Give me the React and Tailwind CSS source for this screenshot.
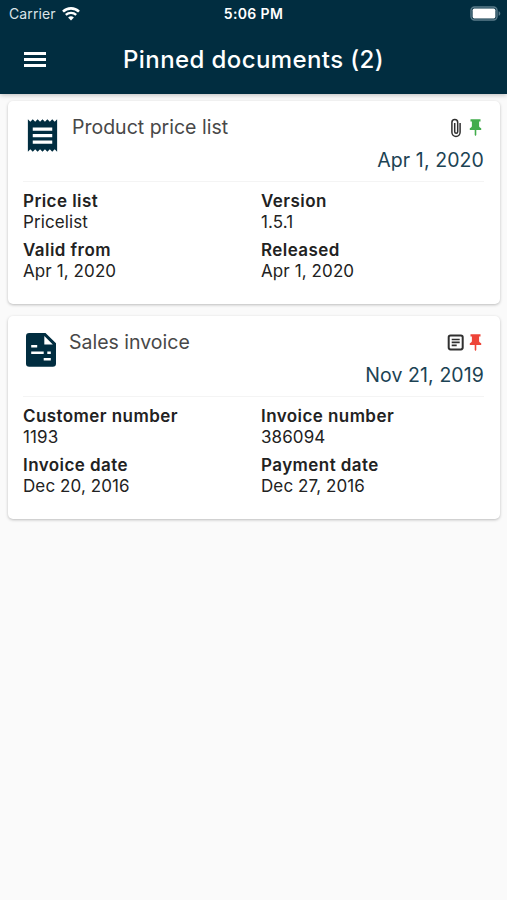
import { MdReceipt } from "react-icons/md";

const documents = [
  {
    id: 1,
    title: "Product price list",
    date: "Apr 1, 2020",
    type: "pricelist",
    fields: [
      ["Price list", "Pricelist"],
      ["Version", "1.5.1"],
      ["Valid from", "Apr 1, 2020"],
      ["Released", "Apr 1, 2020"],
    ],
  },
  {
    id: 2,
    title: "Sales invoice",
    date: "Nov 21, 2019",
    type: "invoice",
    fields: [
      ["Customer number", "1193"],
      ["Invoice number", "386094"],
      ["Invoice date", "Dec 20, 2016"],
      ["Payment date", "Dec 27, 2016"],
    ],
  },
];

function WifiIcon() {
  return (
    <svg width="18" height="14" viewBox="0 0 18 14" fill="none">
      <path d="M1 4.6a11.6 11.6 0 0 1 16 0" stroke="white" strokeWidth="2.6" />
      <path d="M3.8 7.9a7.6 7.6 0 0 1 10.4 0" stroke="white" strokeWidth="2.3" />
      <path d="M9 13.6l-2.9-3a4.2 4.2 0 0 1 5.8 0z" fill="white" />
    </svg>
  );
}

function BatteryIcon() {
  return (
    <svg width="32" height="15" viewBox="0 0 32 15">
      <rect x="1" y="1" width="26" height="13" rx="3.5" fill="none" stroke="#5b7c8b" strokeWidth="1.4" />
      <rect x="2.6" y="2.6" width="22.8" height="9.8" rx="1.6" fill="white" />
      <path d="M28.6 5.2v4.6c1-.4 1.7-1.2 1.7-2.3s-.7-1.9-1.7-2.3z" fill="#5b7c8b" />
    </svg>
  );
}

function InvoiceIcon() {
  return (
    <svg width="30" height="34" viewBox="0 0 30 34">
      <path
        d="M3.2 0H19.5L30 10.3V30.5a3.2 3.2 0 0 1-3.2 3.2H3.2A3.2 3.2 0 0 1 0 30.5V3.2A3.2 3.2 0 0 1 3.2 0z"
        fill="#012d40"
      />
      <path d="M18.3 3v8.5h8.5z" fill="white" />
      <path d="M5.2 12h6v2.6h-6zM5.2 18.5h12.5v2.6H5.2zM21.3 18.5h3.5v2.6h-3.5zM17.7 25h7.1v2.6h-7.1z" fill="white" />
    </svg>
  );
}

function ClipIcon() {
  return (
    <svg width="20" height="20" viewBox="0 0 20 20" fill="none" stroke="#303030" strokeWidth="1.5">
      <path d="M14.1 5v9.300a4.100 4.100 0 0 1-8.200 0V4.400a2.900 2.900 0 0 1 5.800 0v9.400a1.500 1.500 0 0 1-3 0V5" />
    </svg>
  );
}

function ArticleIcon() {
  return (
    <svg width="20" height="20" viewBox="0 0 20 20" fill="none" stroke="#303030">
      <rect x="2.7" y="2.4" width="14" height="14" rx="1.8" strokeWidth="2" />
      <path d="M5.700 6.500h8M5.700 9.400h8M5.700 12.300h5" strokeWidth="1.700" />
    </svg>
  );
}

function PinIcon({ color }) {
  return (
    <svg width="19" height="20" viewBox="0 0 19 20" fill={color}>
      <path d="M4.5 1.2h10v2.200h-1.400v4.300c0 1.300.8 2.100 2.100 2.500v1.700h-4.900v5.200l-.8.800-.8-.8v-5.200H3.800v-1.700c1.300-.4 2.100-1.200 2.100-2.500V3.400H4.500z" />
    </svg>
  );
}

function DocumentCard({ doc }) {
  const isInvoice = doc.type === "invoice";

  return (
    <div className="h-[203px] rounded-[5px] bg-white pr-4 pl-[15px] shadow-[0_1px_3px_rgba(0,0,0,0.25)]">
      <div className="flex h-[81px] border-b border-[#f4f4f4]">
        {isInvoice ? (
          <div className="w-[46px] pt-[17px] pl-[3px]">
            <InvoiceIcon />
          </div>
        ) : (
          <div className="w-[49px] pt-[15px]">
            <MdReceipt size={39} color="#012d40" />
          </div>
        )}
        <h2 className="pt-[12.5px] text-[19.5px] leading-7 text-[#484848]">{doc.title}</h2>
        <div className="ml-auto flex flex-col items-end pt-[17px]">
          <div className="-mr-px flex h-5 items-center">
            {isInvoice ? <ArticleIcon /> : <ClipIcon />}
            <PinIcon color={isInvoice ? "#ee4438" : "#42ad4c"} />
          </div>
          <p className="mt-[8.5px] text-[19.5px] leading-7 tracking-[0.1px] text-[#1c4354]">{doc.date}</p>
        </div>
      </div>
      <div className="grid grid-cols-[238px_1fr] gap-y-[7px] pt-[9.5px] text-[17px] leading-[21px] text-[#222]">
        {doc.fields.map(([label, value]) => (
          <div key={label}>
            <p className="font-semibold tracking-[0.43px]">{label}</p>
            <p className="tracking-[0.1px]">{value}</p>
          </div>
        ))}
      </div>
    </div>
  );
}

export default function App() {
  return (
    <div className="h-[900px] w-[507px] overflow-hidden bg-[#fafafa] font-['Inter',sans-serif]">
      <header className="relative h-[94px] bg-[#012d40] text-white shadow-[0_1px_5px_rgba(0,0,0,0.25)]">
        <div className="grid h-[27px] grid-cols-3 items-center px-[9px] text-[14px]">
          <div className="flex items-center gap-[6px] text-[#dbe4e8]">
            <span className="tracking-[0.1px]">Carrier</span>
            <WifiIcon />
          </div>
          <span className="text-center text-[14px] font-semibold tracking-[0.35px]">5:06 PM</span>
          <div className="-mr-[4px] flex justify-end">
            <BatteryIcon />
          </div>
        </div>
        <div className="grid h-[66px] grid-cols-[100px_1fr_100px] items-center">
          <button className="mb-[2px] flex flex-col gap-[3px] pl-6">
            <span className="h-[3px] w-[22px] bg-white" />
            <span className="h-[3px] w-[22px] bg-white" />
            <span className="h-[3px] w-[22px] bg-white" />
          </button>
          <h1 className="text-center text-[24px] font-medium tracking-[0.4px]">Pinned documents (2)</h1>
        </div>
      </header>

      <main className="flex flex-col gap-3 pt-[6.5px] pr-[7px] pl-2">
        {documents.map((doc) => (
          <DocumentCard key={doc.id} doc={doc} />
        ))}
      </main>
    </div>
  );
}
